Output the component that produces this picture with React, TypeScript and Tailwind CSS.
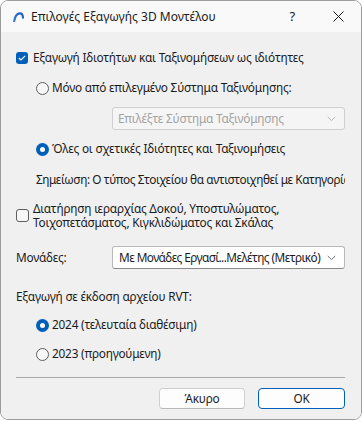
import React from 'react';

const font = { fontFamily: '"Noto Sans", "Open Sans", sans-serif' };

const Logo = () => (
  <svg width="11" height="10" viewBox="0 0 11 10">
    <defs>
      <linearGradient id="lg" x1="0" y1="1" x2="1" y2="0">
        <stop offset="0" stopColor="#3a7bd5" />
        <stop offset="1" stopColor="#1f5fbf" />
      </linearGradient>
    </defs>
    <path d="M1.2 9.2 C2 4 4.5 1.4 7 1.4 C8.8 1.4 9.8 3 10 5.6" fill="none" stroke="url(#lg)" strokeWidth="2.2" strokeLinecap="round" />
  </svg>
);

const Chevron = ({ color }: { color: string }) => (
  <svg width="9" height="6" viewBox="0 0 9 6">
    <path d="M0.8 1 L4.5 4.6 L8.2 1" fill="none" stroke={color} strokeWidth="1" />
  </svg>
);

const Checkbox = ({ checked }: { checked?: boolean }) =>
  checked ? (
    <span className="flex h-[12px] w-[12px] shrink-0 items-center justify-center rounded-[3px] bg-[#005fb8]">
      <svg width="8" height="6" viewBox="0 0 8 6">
        <path d="M0.8 3 L3 5 L7.2 0.9" fill="none" stroke="#fff" strokeWidth="1.1" />
      </svg>
    </span>
  ) : (
    <span className="h-[13px] w-[13px] shrink-0 rounded-[3px] border border-[#5e5e5e] bg-[#f7f7f7]" />
  );

const Radio = ({ checked }: { checked?: boolean }) =>
  checked ? (
    <span className="flex h-[13px] w-[13px] shrink-0 items-center justify-center rounded-full bg-[#005fb8]">
      <span className="h-[5px] w-[5px] rounded-full bg-white" />
    </span>
  ) : (
    <span className="h-[13px] w-[13px] shrink-0 rounded-full border border-[#5e5e5e] bg-[#f7f7f7]" />
  );

export default function App() {
  return (
    <div className="h-[421px] w-[362px] bg-white text-[11.8px] tracking-[-0.2px] text-[#1b1b1b]" style={font}>
      <div className="flex h-[420px] w-[362px] flex-col overflow-hidden rounded-[8px] border border-[#9c9c9c]">
        {/* Title bar */}
        <div className="flex h-[31px] shrink-0 items-center bg-[#f9f9f9] pl-[12px]">
          <Logo />
          <span className="ml-[7px] text-[12px] leading-none tracking-normal">Επιλογές Εξαγωγής 3D Μοντέλου</span>
          <span className="ml-auto mr-[38px] text-[13px] leading-none">?</span>
          <svg width="11" height="11" viewBox="0 0 11 11" className="mr-[17px]">
            <path d="M0.5 0.5 L10.5 10.5 M10.5 0.5 L0.5 10.5" stroke="#1b1b1b" strokeWidth="1" />
          </svg>
        </div>

        {/* Body */}
        <div className="flex flex-1 flex-col bg-[#f0f0f0] pl-[15px] pr-[16px] pt-[16px]">
          <label className="flex h-[20px] items-center gap-[5px]">
            <Checkbox checked />
            <span>Εξαγωγή Ιδιοτήτων και Ταξινομήσεων ως ιδιότητες</span>
          </label>

          <label className="mt-[10px] flex h-[20px] items-center gap-[3px] pl-[20px]">
            <Radio />
            <span>Μόνο από επιλεγμένο Σύστημα Ταξινόμησης:</span>
          </label>

          <div className="ml-[96px] mt-[9px] flex h-[23px] items-center rounded-[3px] border border-[#cfcfcf] bg-[#f5f5f5] pl-[5px] pr-[8px] text-[#a3a3a3]">
            <span className="flex-1">Επιλέξτε Σύστημα Ταξινόμησης</span>
            <Chevron color="#b5b5b5" />
          </div>

          <label className="mt-[9px] flex h-[20px] items-center gap-[3px] pl-[20px]">
            <Radio checked />
            <span>Όλες οι σχετικές Ιδιότητες και Ταξινομήσεις</span>
          </label>

          <div className="mt-[11px] flex h-[20px] items-center overflow-hidden whitespace-nowrap pl-[20px] tracking-[-0.4px]">
            Σημείωση: Ο τύπος Στοιχείου θα αντιστοιχηθεί με Κατηγορία
          </div>

          <label className="mt-[11px] flex items-center gap-[4px]">
            <Checkbox />
            <span className="flex flex-col leading-[14px]">
              <span>Διατήρηση ιεραρχίας Δοκού, Υποστυλώματος,</span>
              <span>Τοιχοπετάσματος, Κιγκλιδώματος και Σκάλας</span>
            </span>
          </label>

          <div className="mt-[17px] flex h-[23px] items-center">
            <span className="w-[96px] shrink-0">Μονάδες:</span>
            <div className="flex h-[23px] min-w-0 flex-1 items-center rounded-[3px] border border-[#b9b9b9] border-b-[#8a8a8a] bg-white pl-[6px] pr-[8px]">
              <span className="flex-1 overflow-hidden whitespace-nowrap tracking-[-0.55px]">Με Μονάδες Εργασί...Μελέτης (Μετρικό)</span>
              <Chevron color="#6e6e6e" />
            </div>
          </div>

          <div className="mt-[18px] flex h-[20px] items-center">Εξαγωγή σε έκδοση αρχείου RVT:</div>

          <label className="mt-[8px] flex h-[20px] items-center gap-[3px] pl-[20px]">
            <Radio checked />
            <span>2024 (τελευταία διαθέσιμη)</span>
          </label>

          <label className="mt-[9px] flex h-[20px] items-center gap-[3px] pl-[20px]">
            <Radio />
            <span>2023 (προηγούμενη)</span>
          </label>

          <div className="mt-[13px] h-px bg-[#a8a8a8]" />

          <div className="mt-[10px] flex justify-end gap-[13px]">
            <button className="h-[21px] w-[86px] rounded-[4px] border border-[#d0d0d0] border-b-[#b8b8b8] bg-[#fdfdfd] leading-none">
              Άκυρο
            </button>
            <button className="h-[21px] w-[87px] rounded-[4px] border border-[#005fb8] bg-[#fdfdfd] leading-none">
              OK
            </button>
          </div>
        </div>
      </div>
    </div>
  );
}
